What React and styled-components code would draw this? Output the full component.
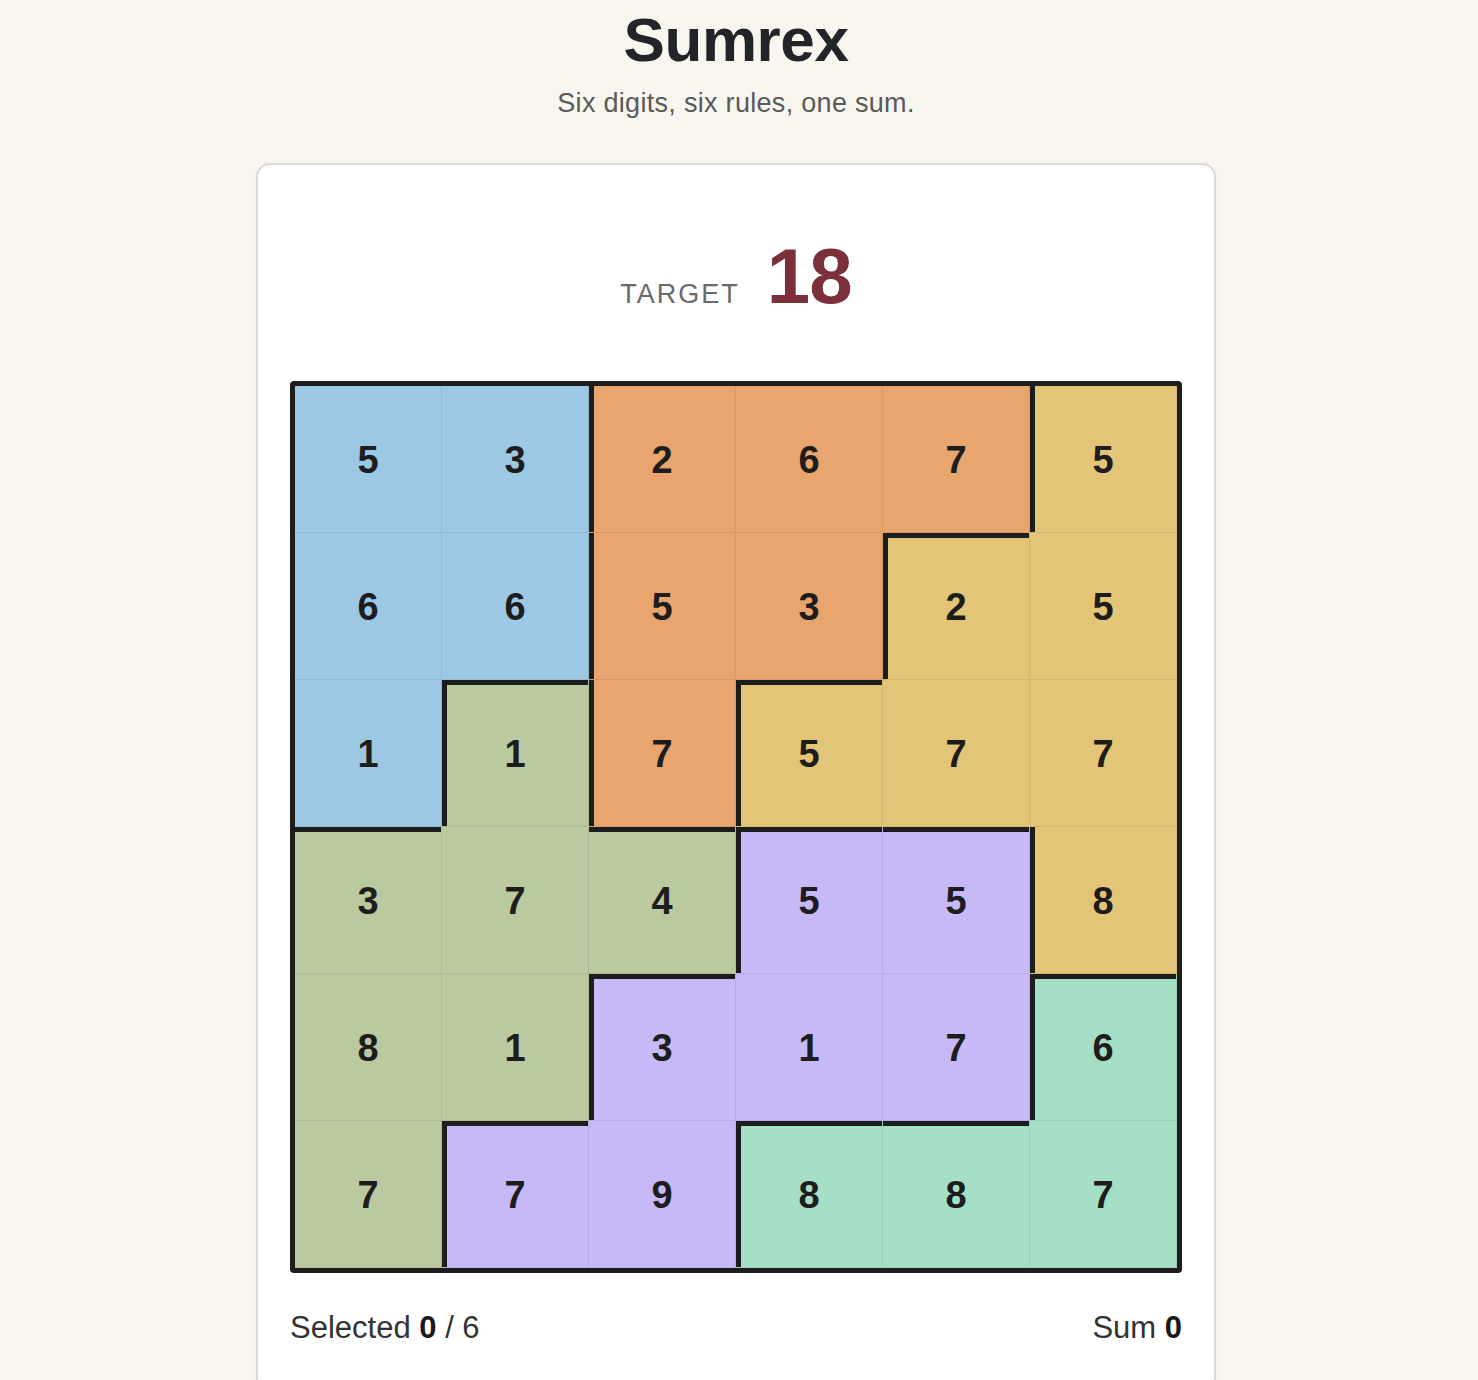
import React from "react";
import styled, { createGlobalStyle } from "styled-components";

const Global = createGlobalStyle`
  html, body { margin: 0; padding: 0; background: #f9f6ef; }
  body { font-family: "Liberation Sans", Arial, Helvetica, sans-serif; color: #222; }
`;

const Page = styled.div`
  display: flex;
  flex-direction: column;
  align-items: center;
  padding-top: 6px;
  padding-right: 6px;
`;

const Title = styled.h1`
  margin: 0;
  font-size: 62px;
  line-height: 1.1;
  font-weight: 700;
  letter-spacing: -0.4px;
  color: #222427;
`;

const Subtitle = styled.p`
  margin: 11px 0 0;
  font-size: 27px;
  line-height: 1.4;
  letter-spacing: 0.3px;
  color: #5a5a5a;
`;

const Card = styled.section`
  box-sizing: border-box;
  width: 960px;
  margin-top: 40px;
  padding: 72px 32px 40px;
  background: #fff;
  border: 2px solid #dcdad5;
  border-radius: 14px;
  box-shadow: 0 2px 10px rgba(0, 0, 0, 0.03);
`;

const TargetRow = styled.div`
  display: flex;
  justify-content: center;
  align-items: baseline;
  gap: 27px;
  margin-bottom: 66px;
`;

const TargetLabel = styled.span`
  font-size: 27px;
  letter-spacing: 2px;
  color: #6a6a6a;
`;

const TargetValue = styled.span`
  font-size: 78px;
  line-height: 1;
  font-weight: 700;
  letter-spacing: -1px;
  color: #7a2f3b;
`;

const Board = styled.div`
  box-sizing: border-box;
  width: 892px;
  display: grid;
  grid-template-columns: repeat(6, 1fr);
  border: 5px solid #1d1d1d;
  border-radius: 4px;
  overflow: hidden;
  background: #1d1d1d;
`;

const Cell = styled.div`
  box-sizing: border-box;
  aspect-ratio: 1 / 1;
  display: flex;
  align-items: center;
  justify-content: center;
  padding-top: 4px;
  background: ${(p) => p.$bg};
  border-right: 1px solid rgba(0, 0, 0, 0.07);
  border-bottom: 1px solid rgba(0, 0, 0, 0.07);
  box-shadow: ${(p) =>
    [p.$left ? "inset 5px 0 0 #1d1d1d" : null, p.$top ? "inset 0 5px 0 #1d1d1d" : null]
      .filter(Boolean)
      .join(", ") || "none"};
  font-size: 38px;
  font-weight: 700;
  color: #1d1d1d;
  user-select: none;
  cursor: pointer;
`;

const Footer = styled.div`
  display: flex;
  justify-content: space-between;
  margin-top: 32px;
  font-size: 31px;
  line-height: 1.5;
  color: #333;
`;

const Strong = styled.b`
  font-weight: 700;
  color: #1a1a1a;
`;

const COLORS = {
  B: "#9dc8e4",
  O: "#e8a66e",
  Y: "#e3c578",
  G: "#bbc9a1",
  P: "#c7b8f7",
  M: "#a5dfc5",
};

const REGIONS = [
  "BBOOOY",
  "BBOOYY",
  "BGOYYY",
  "GGGPPY",
  "GGPPPM",
  "GPPMMM",
];

const DIGITS = [
  [5, 3, 2, 6, 7, 5],
  [6, 6, 5, 3, 2, 5],
  [1, 1, 7, 5, 7, 7],
  [3, 7, 4, 5, 5, 8],
  [8, 1, 3, 1, 7, 6],
  [7, 7, 9, 8, 8, 7],
];

export default function App() {
  const cells = [];
  for (let r = 0; r < 6; r++) {
    for (let c = 0; c < 6; c++) {
      const reg = REGIONS[r][c];
      const top = r > 0 && REGIONS[r - 1][c] !== reg;
      const left = c > 0 && REGIONS[r][c - 1] !== reg;
      cells.push(
        <Cell key={`${r}-${c}`} $bg={COLORS[reg]} $top={top} $left={left}>
          {DIGITS[r][c]}
        </Cell>
      );
    }
  }
  return (
    <>
      <Global />
      <Page>
        <Title>Sumrex</Title>
        <Subtitle>Six digits, six rules, one sum.</Subtitle>
        <Card>
          <TargetRow>
            <TargetLabel>TARGET</TargetLabel>
            <TargetValue>18</TargetValue>
          </TargetRow>
          <Board>{cells}</Board>
          <Footer>
            <span>
              Selected <Strong>0</Strong> / 6
            </span>
            <span>
              Sum <Strong>0</Strong>
            </span>
          </Footer>
        </Card>
      </Page>
    </>
  );
}
